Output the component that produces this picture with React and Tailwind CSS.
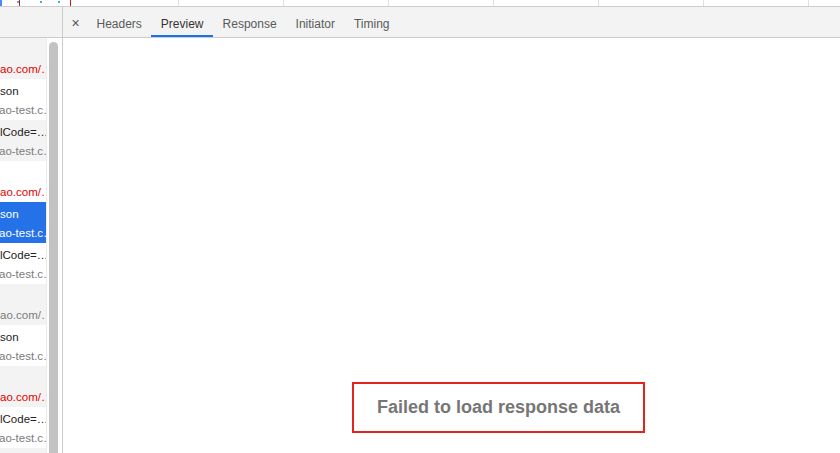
import React from "react";

const rows = [
  { bg: "gray", name: "", sub: "ao.com/api/track/collect", subType: "url", tone: "red" },
  { bg: "white", name: "son", sub: "ao-test.com/api/user/info", subType: "host" },
  { bg: "gray", name: "lCode=10012", sub: "ao-test.com/api/config", subType: "host", nameType: "code" },
  { bg: "white", name: "", sub: "ao.com/api/track/collect", subType: "url", tone: "red" },
  { bg: "selected", name: "son", sub: "ao-test.com/api/user/info", subType: "host" },
  { bg: "white", name: "lCode=10012", sub: "ao-test.com/api/config", subType: "host", nameType: "code" },
  { bg: "gray", name: "", sub: "ao.com/api/track/collect", subType: "url" },
  { bg: "white", name: "son", sub: "ao-test.com/api/user/info", subType: "host" },
  { bg: "gray", name: "", sub: "ao.com/api/track/collect", subType: "url", tone: "red" },
  { bg: "white", name: "lCode=10012", sub: "ao-test.com/api/config", subType: "host", nameType: "code" },
  { bg: "gray", name: "", sub: "ao.com/api/track/collect", subType: "url", tone: "red" },
];

const widthFor = {
  url: "w-[55px]",
  host: "w-[58px] -ml-[1px]",
  code: "w-[51px]",
};

const RequestRow = ({ row }) => {
  const selected = row.bg === "selected";
  const bg = selected ? "bg-[#2571e8]" : row.bg === "gray" ? "bg-[#f3f3f3]" : "bg-white";
  const nameColor = selected ? "text-white" : row.tone === "red" ? "text-[#e50000]" : "text-[#222]";
  const subColor = selected ? "text-white" : row.tone === "red" ? "text-[#e50000]" : "text-[#7b7b7b]";
  return (
    <div className={`h-[41px] shrink-0 overflow-hidden pt-[3px] text-[11.5px] leading-[19px] ${bg}`}>
      <div
        className={`whitespace-nowrap overflow-hidden text-ellipsis ${nameColor} ${
          row.nameType === "code" ? widthFor.code : "w-[46px]"
        }`}
      >
        {row.name || "\u00a0"}
      </div>
      <div className={`whitespace-nowrap overflow-hidden text-ellipsis ${subColor} ${widthFor[row.subType]}`}>
        {row.sub}
      </div>
    </div>
  );
};

const tabs = ["Headers", "Preview", "Response", "Initiator", "Timing"];

export default function App() {
  return (
    <div className="w-[840px] h-[453px] overflow-hidden bg-white flex flex-col font-['Liberation_Sans',Arial,sans-serif]">
      {/* timeline strip */}
      <div className="relative h-[7px] shrink-0 flex border-b border-[#cdcdcd]">
        <div className="w-[178px] shrink-0" />
        {[0, 1, 2, 3, 4, 5, 6].map((i) => (
          <div key={i} className="w-[105px] shrink-0 border-l border-[#e0e0e0]" />
        ))}
        <div className="absolute left-0 top-0 w-[2px] h-[6px] bg-[#4a8af4]" />
        <div className="absolute left-[19px] top-0 w-[1px] h-[6px] bg-[#c4161c]" />
        <div className="absolute left-[70px] top-0 w-[1px] h-[6px] bg-[#c4161c]" />
        <div className="absolute left-[17px] top-[1px] w-[2px] h-[2px] bg-[#3fb6c0]" />
        <div className="absolute left-[40px] top-[1px] w-[2px] h-[2px] bg-[#3fb6c0]" />
        <div className="absolute left-[58px] top-[1px] w-[2px] h-[2px] bg-[#3fb6c0]" />
      </div>

      <div className="flex flex-1 min-h-0">
        {/* request list */}
        <div className="w-[63px] shrink-0 flex flex-col border-r border-[#cbcbcb]">
          <div className="h-[31px] shrink-0 bg-[#f3f3f3] border-b border-[#cdcdcd]" />
          <div className="flex flex-1 min-h-0">
            <div className="w-[46px] shrink-0 overflow-hidden flex flex-col">
              {rows.map((row, i) => (
                <RequestRow key={i} row={row} />
              ))}
            </div>
            <div className="flex-1 border-l border-[#ececec] bg-white pl-[2px]">
              <div className="mt-[4px] w-[9px] h-[460px] rounded-full bg-[#c3c3c3]" />
            </div>
          </div>
        </div>

        {/* details */}
        <div className="flex-1 min-w-0 flex flex-col">
          <div className="h-[31px] shrink-0 bg-[#f3f3f3] border-b border-[#cdcdcd] flex items-stretch text-[12px]">
            <div className="w-[24px] shrink-0 flex items-center justify-center text-[14px] text-[#555] pl-[1px] pt-[2px]">
              ×
            </div>
            {tabs.map((t) => {
              const active = t === "Preview";
              return (
                <div
                  key={t}
                  className={`px-[9.5px] flex items-center border-b-2 ${
                    active ? "border-[#1a73e8] text-[#333]" : "border-transparent text-[#5a5a5a]"
                  }`}
                >
                  <span className="mt-[5px]">{t}</span>
                </div>
              );
            })}
          </div>
          <div className="flex-1 bg-white">
            <div className="ml-[289px] mt-[344px] w-[293px] h-[51px] border-2 border-[#e3241c] flex items-center justify-center">
              <span className="text-[18px] font-bold text-[#767676]">Failed to load response data</span>
            </div>
          </div>
        </div>
      </div>
    </div>
  );
}
